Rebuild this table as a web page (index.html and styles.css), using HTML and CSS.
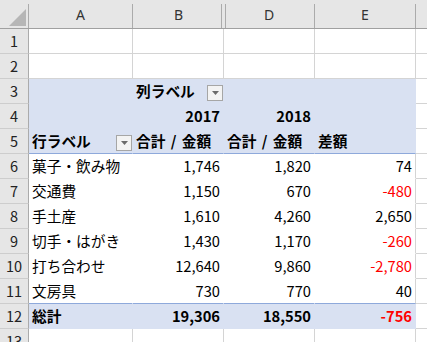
FILE: index.html
```html
<!DOCTYPE html>
<html lang="ja">
<head>
<meta charset="utf-8">
<link rel="stylesheet" href="styles.css">
</head>
<body>
<div class="sheet">
  <div class="row hdr">
    <div class="corner"><svg width="17" height="17" viewBox="0 0 17 17"><polygon points="0,17 17,17 17,0" fill="#b6b6b6"/></svg></div>
    <div class="ch">A</div>
    <div class="ch chB">B</div>
    <div class="ch chD">D</div>
    <div class="ch">E</div>
    <div class="ch rest"></div>
  </div>

  <div class="row"><div class="rh">1</div><div class="c"></div><div class="c"></div><div class="c"></div><div class="c"></div><div class="c rest"></div></div>
  <div class="row"><div class="rh">2</div><div class="c"></div><div class="c"></div><div class="c"></div><div class="c"></div><div class="c rest"></div></div>

  <div class="row">
    <div class="rh">3</div>
    <div class="c pv"></div>
    <div class="c pv b btncell nopr"><span>列ラベル</span><span class="dd"><svg width="7" height="4" viewBox="0 0 7 4"><polygon points="0,0 7,0 3.5,4" fill="#6b6b6b"/></svg></span></div>
    <div class="c pv"></div>
    <div class="c pv"></div>
    <div class="c rest"></div>
  </div>

  <div class="row">
    <div class="rh">4</div>
    <div class="c pv"></div>
    <div class="c pv b num">2017</div>
    <div class="c pv b num">2018</div>
    <div class="c pv"></div>
    <div class="c rest"></div>
  </div>

  <div class="row">
    <div class="rh">5</div>
    <div class="c pv hb b btncell nopr"><span>行ラベル</span><span class="dd"><svg width="7" height="4" viewBox="0 0 7 4"><polygon points="0,0 7,0 3.5,4" fill="#6b6b6b"/></svg></span></div>
    <div class="c pv hb b ws">合計 / 金額</div>
    <div class="c pv hb b ws">合計 / 金額</div>
    <div class="c pv hb b">差額</div>
    <div class="c rest"></div>
  </div>

  <div class="row"><div class="rh">6</div><div class="c pd">菓子・飲み物</div><div class="c pd num">1,746</div><div class="c pd num">1,820</div><div class="c pd last num">74</div><div class="c rest"></div></div>
  <div class="row"><div class="rh">7</div><div class="c pd">交通費</div><div class="c pd num">1,150</div><div class="c pd num">670</div><div class="c pd last num neg">-480</div><div class="c rest"></div></div>
  <div class="row"><div class="rh">8</div><div class="c pd">手土産</div><div class="c pd num">1,610</div><div class="c pd num">4,260</div><div class="c pd last num">2,650</div><div class="c rest"></div></div>
  <div class="row"><div class="rh">9</div><div class="c pd">切手・はがき</div><div class="c pd num">1,430</div><div class="c pd num">1,170</div><div class="c pd last num neg">-260</div><div class="c rest"></div></div>
  <div class="row"><div class="rh">10</div><div class="c pd">打ち合わせ</div><div class="c pd num">12,640</div><div class="c pd num">9,860</div><div class="c pd last num neg">-2,780</div><div class="c rest"></div></div>
  <div class="row"><div class="rh">11</div><div class="c pd bt">文房具</div><div class="c pd bt num">730</div><div class="c pd bt num">770</div><div class="c pd bt last num">40</div><div class="c rest"></div></div>

  <div class="row">
    <div class="rh">12</div>
    <div class="c pv b">総計</div>
    <div class="c pv b num">19,306</div>
    <div class="c pv b num">18,550</div>
    <div class="c pv b num neg">-756</div>
    <div class="c rest"></div>
  </div>

  <div class="row"><div class="rh">13</div><div class="c"></div><div class="c"></div><div class="c"></div><div class="c"></div><div class="c rest"></div></div>
</div>
</body>
</html>
```

FILE: styles.css
```css
html, body {
  margin: 0;
  padding: 0;
  background: #ffffff;
  overflow: hidden;
}

.sheet {
  font-family: "Noto Sans CJK JP", "Noto Sans", sans-serif;
  font-size: 14.7px;
  color: #000;
}

.row {
  display: grid;
  grid-template-columns: 29px 104px 91px 91px 101px 1fr;
  height: 25px;
}

.hdr {
  height: 29px;
  box-sizing: border-box;
  padding-top: 4px;
  background: #e6e6e6;
  border-bottom: 1px solid #a0a0a0;
}

.corner {
  display: flex;
  align-items: flex-end;
  justify-content: flex-end;
  padding: 0 2px 2px 0;
  border-right: 1px solid #ababab;
}

.ch {
  box-sizing: border-box;
  border-right: 1px solid #ababab;
  text-align: center;
  font-family: "Noto Sans", sans-serif;
  font-size: 14px;
  line-height: 22px;
  color: #333;
}

.chB {
  border-right: none;
  box-shadow: inset -2px 0 0 #e6e6e6, inset -3px 0 0 #ababab;
}

.chD {
  box-shadow: inset 1px 0 0 #e6e6e6, inset 2px 0 0 #ababab;
}

.ch.rest {
  border-right: none;
}

.rh {
  box-sizing: border-box;
  background: #e6e6e6;
  border-right: 1px solid #ababab;
  border-bottom: 1px solid #cdcdcd;
  text-align: center;
  line-height: 24px;
  font-size: 14.5px;
  color: #222;
}

.c {
  box-sizing: border-box;
  border-right: 1px solid #d4d4d4;
  border-bottom: 1px solid #d4d4d4;
  padding: 0 3px;
  line-height: 24px;
  white-space: nowrap;
  overflow: hidden;
}

.c.rest {
  border-right: none;
}

.pv {
  background: #d9e1f2;
  border-color: transparent;
}

.pv.hb {
  border-bottom-color: #8ea9db;
}

.pd {
  border-right-color: #ffffff;
  border-bottom-color: #ffffff;
}

.pd.last {
  border-right-color: #d4d4d4;
}

.pd.bt {
  border-bottom-color: #8ea9db;
}

.b {
  font-weight: 700;
}

.ws {
  word-spacing: 2px;
}

.num {
  text-align: right;
}

.neg {
  color: #ff0000;
}

.btncell {
  display: flex;
  align-items: flex-start;
}

.nopr {
  padding-right: 0;
}

.dd {
  margin-left: auto;
  margin-top: 6px;
  width: 16px;
  height: 16px;
  box-sizing: border-box;
  border: 1px solid #a6a6a6;
  background: #f3f3f3;
  display: flex;
  align-items: center;
  justify-content: center;
}
```
